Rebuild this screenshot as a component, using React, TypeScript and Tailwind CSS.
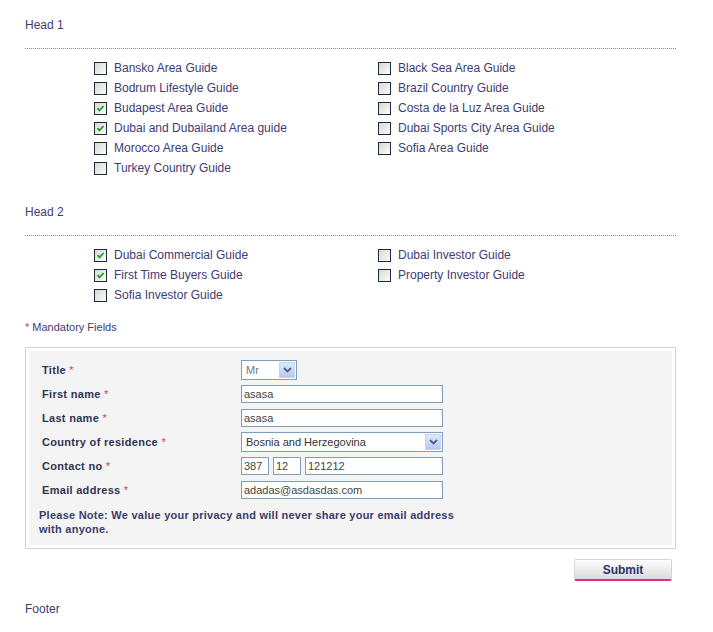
import React from "react";

const HEAD1_LEFT = [
  { label: "Bansko Area Guide", checked: false },
  { label: "Bodrum Lifestyle Guide", checked: false },
  { label: "Budapest Area Guide", checked: true },
  { label: "Dubai and Dubailand Area guide", checked: true },
  { label: "Morocco Area Guide", checked: false },
  { label: "Turkey Country Guide", checked: false },
];

const HEAD1_RIGHT = [
  { label: "Black Sea Area Guide", checked: false },
  { label: "Brazil Country Guide", checked: false },
  { label: "Costa de la Luz Area Guide", checked: false },
  { label: "Dubai Sports City Area Guide", checked: false },
  { label: "Sofia Area Guide", checked: false },
];

const HEAD2_LEFT = [
  { label: "Dubai Commercial Guide", checked: true },
  { label: "First Time Buyers Guide", checked: true },
  { label: "Sofia Investor Guide", checked: false },
];

const HEAD2_RIGHT = [
  { label: "Dubai Investor Guide", checked: false },
  { label: "Property Investor Guide", checked: false },
];

type Item = { label: string; checked: boolean };

function Checkbox({ checked }: { checked: boolean }) {
  return (
    <span className="w-[13px] h-[13px] shrink-0 border border-[#1c2c3e] bg-gradient-to-br from-[#d8d8d4] to-[#fbfbf9] flex items-center justify-center">
      {checked && (
        <svg width="9" height="9" viewBox="0 0 9 9">
          <path d="M1.5 4.2 L3.5 6.4 L7.6 2" fill="none" stroke="#21a121" strokeWidth="1.8" />
        </svg>
      )}
    </span>
  );
}

function Column({ items }: { items: Item[] }) {
  return (
    <div className="flex flex-col">
      {items.map((it) => (
        <label key={it.label} className="flex items-center gap-[7px] h-[20px]">
          <Checkbox checked={it.checked} />
          <span className="text-[12px] leading-[14px] text-[#403b74]">{it.label}</span>
        </label>
      ))}
    </div>
  );
}

function Section({ title, left, right }: { title: string; left: Item[]; right: Item[] }) {
  return (
    <div>
      <div className="text-[12px] leading-[14px] text-[#403b74] pb-[16px] border-b border-dotted border-[#8a8a8a]">
        {title}
      </div>
      <div className="grid grid-cols-[284px_284px] pl-[69px] pt-[9px]">
        <Column items={left} />
        <Column items={right} />
      </div>
    </div>
  );
}

function Star() {
  return <span className="text-[#d0405e] font-normal"> *</span>;
}

function Arrow() {
  return (
    <span className="w-[16px] h-[16px] bg-gradient-to-b from-[#dde8fb] to-[#b5c9f0] border border-[#c3d3f3] flex items-center justify-center">
      <svg width="9" height="6" viewBox="0 0 9 6">
        <path d="M1 1 L4.5 4.5 L8 1" fill="none" stroke="#4d6185" strokeWidth="1.8" />
      </svg>
    </span>
  );
}

function TextBox({ value, w }: { value: string; w: string }) {
  return (
    <div className={`${w} h-[18px] border border-[#7f9db9] bg-white px-[2px] text-[11px] leading-[16px] text-[#444]`}>
      {value}
    </div>
  );
}

function FormRow({ label, children }: { label: string; children: React.ReactNode }) {
  return (
    <div className="flex items-center h-[24px]">
      <div className="w-[199px] pl-[13px] text-[11px] font-bold tracking-[0.3px] text-[#2f3551] box-content">
        {label}
        <Star />
      </div>
      {children}
    </div>
  );
}

export default function App() {
  return (
    <div className="min-h-screen bg-white" style={{ fontFamily: '"Liberation Sans", Arial, sans-serif' }}>
      <div className="ml-[25px] w-[651px] pt-[18px]">
        <Section title="Head 1" left={HEAD1_LEFT} right={HEAD1_RIGHT} />
        <div className="h-[27px]" />
        <Section title="Head 2" left={HEAD2_LEFT} right={HEAD2_RIGHT} />

        <div className="mt-[16px] text-[11px] leading-[13px] text-[#403b74]">
          <span className="text-[#d0405e]">*</span> Mandatory Fields
        </div>

        <div className="mt-[13px] border border-[#d3d3d3] p-[3px]">
          <div className="bg-[#f4f4f4] pt-[7px] pb-[9px]">
            <FormRow label="Title">
              <div className="w-[56px] h-[20px] border border-[#7f9db9] bg-white flex items-center justify-between pl-[4px] pr-[1px]">
                <span className="text-[11px] text-[#777]">Mr</span>
                <Arrow />
              </div>
            </FormRow>
            <FormRow label="First name">
              <TextBox value="asasa" w="w-[202px]" />
            </FormRow>
            <FormRow label="Last name">
              <TextBox value="asasa" w="w-[202px]" />
            </FormRow>
            <FormRow label="Country of residence">
              <div className="w-[202px] h-[20px] border border-[#7f9db9] bg-white flex items-center justify-between pl-[4px] pr-[1px]">
                <span className="text-[11px] text-[#333]">Bosnia and Herzegovina</span>
                <Arrow />
              </div>
            </FormRow>
            <FormRow label="Contact no">
              <div className="flex gap-[4px]">
                <TextBox value="387" w="w-[28px]" />
                <TextBox value="12" w="w-[28px]" />
                <TextBox value="121212" w="w-[138px]" />
              </div>
            </FormRow>
            <FormRow label="Email address">
              <TextBox value="adadas@asdasdas.com" w="w-[202px]" />
            </FormRow>
            <p className="mt-[6px] pl-[10px] text-[11px] leading-[14px] font-bold tracking-[0.25px] text-[#3b3d6b]">
              Please Note: We value your privacy and will never share your email address
              <br />
              with anyone.
            </p>
          </div>
        </div>

        <div className="flex justify-end pr-[4px] mt-[10px]">
          <button className="w-[98px] h-[22px] border border-[#d6d6d6] border-b-[2px] border-b-[#e0308a] rounded-[2px] bg-gradient-to-b from-white to-[#dadada] text-[12px] font-bold text-[#2a3567]">
            Submit
          </button>
        </div>

        <div className="mt-[21px] text-[12px] leading-[14px] text-[#403b74]">Footer</div>
      </div>
    </div>
  );
}
